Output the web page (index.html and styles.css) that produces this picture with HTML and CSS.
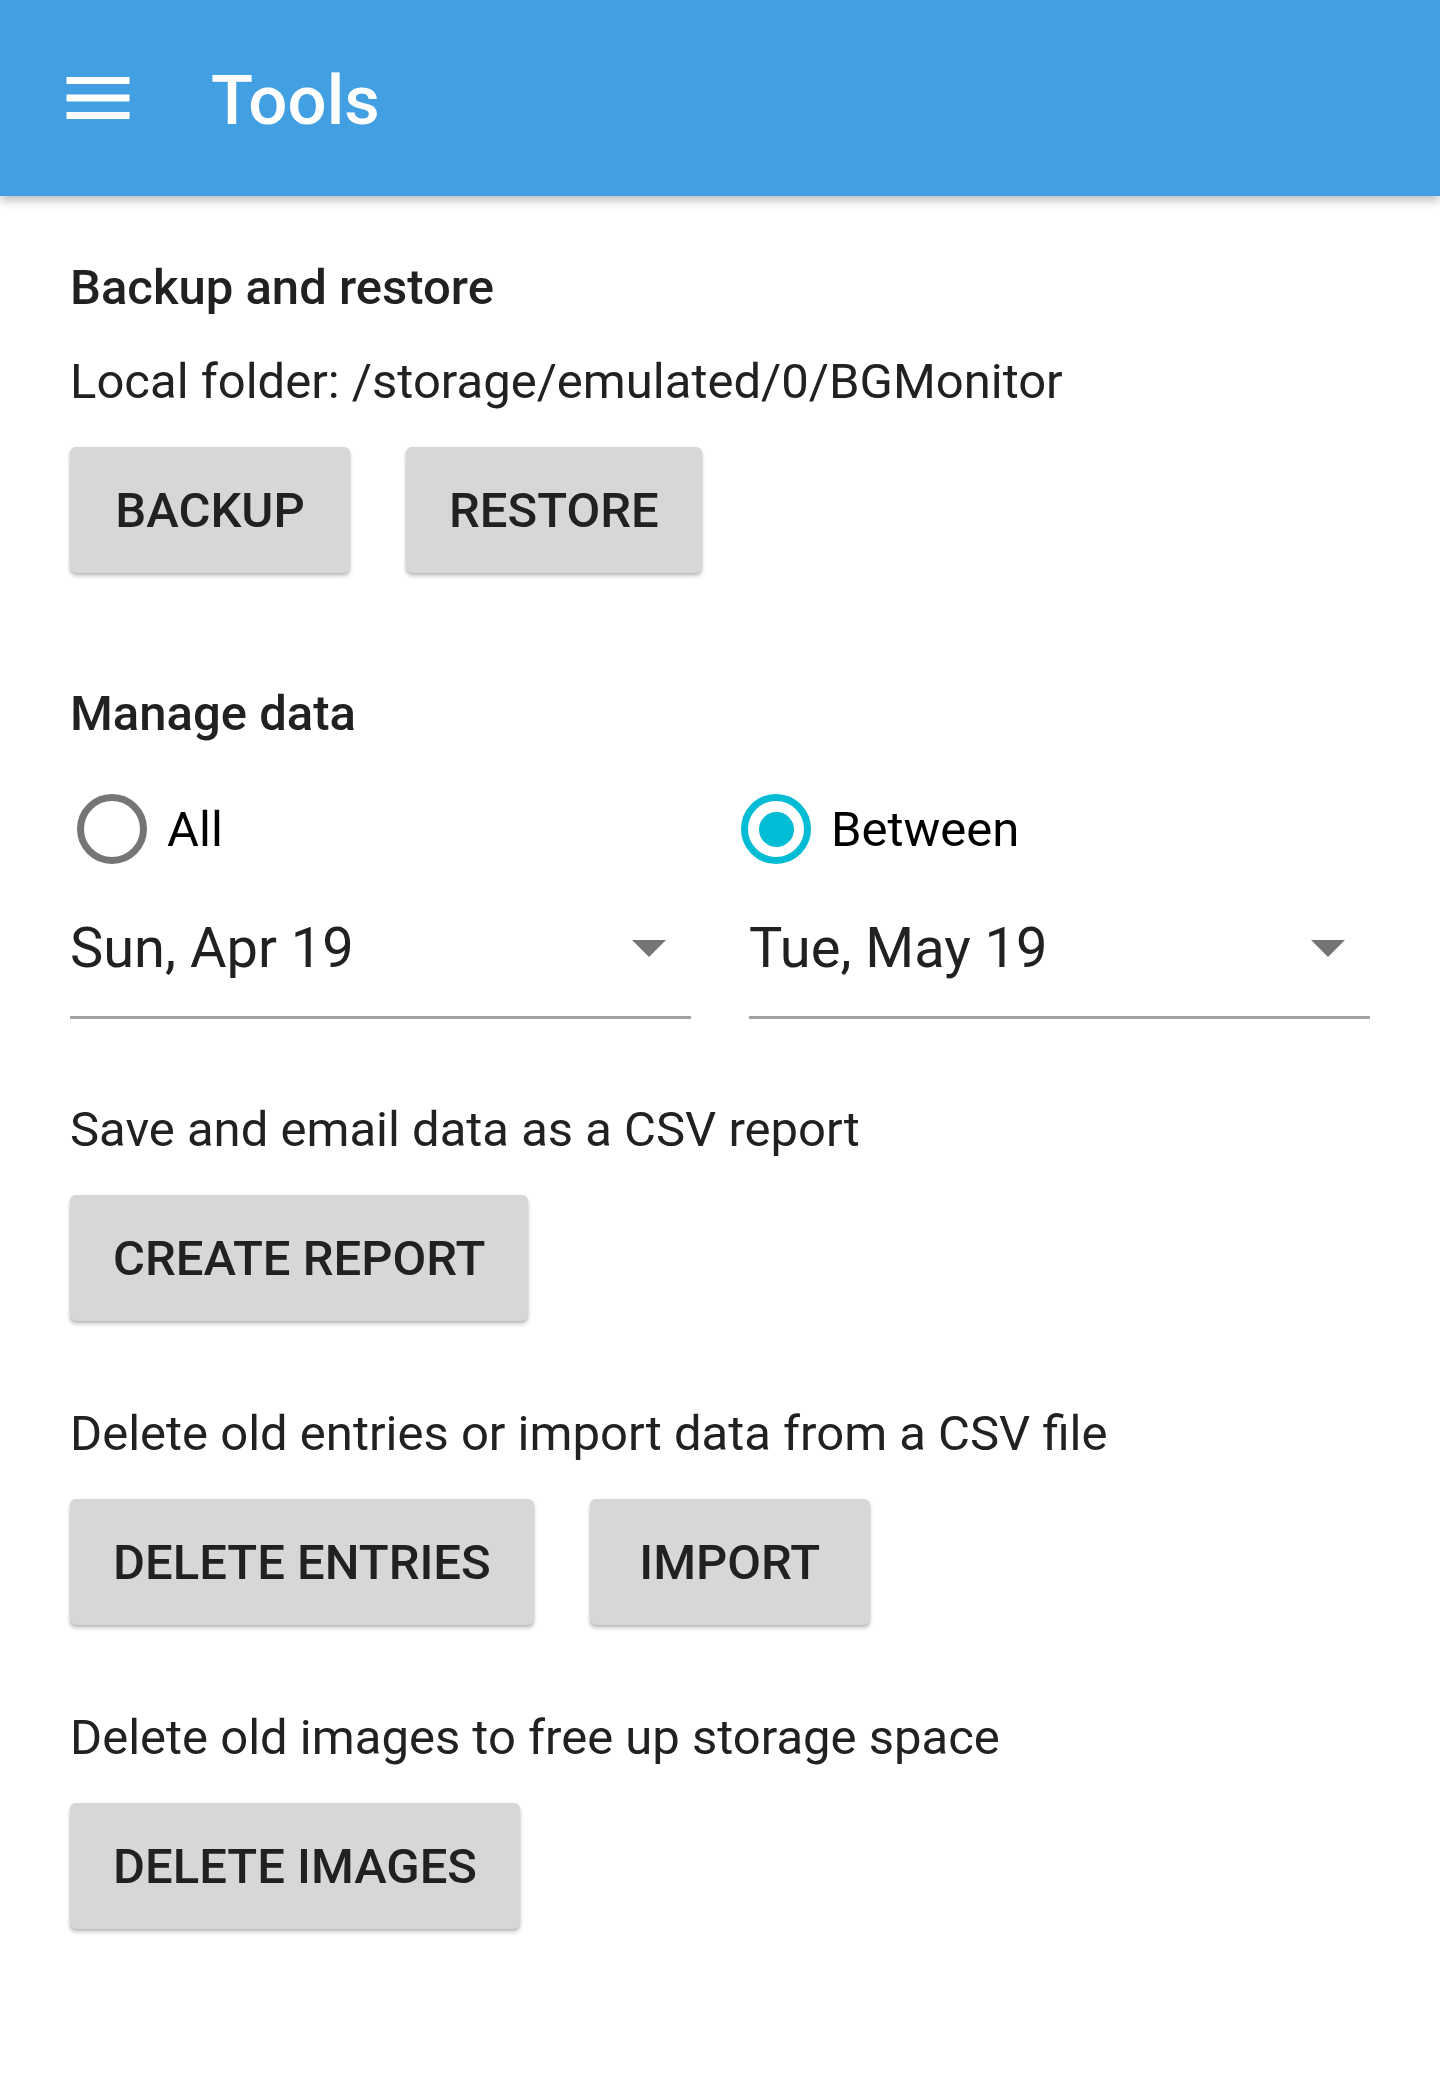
FILE: index.html
```html
<!DOCTYPE html>
<html lang="en">
<head>
<meta charset="utf-8">
<title>Tools</title>
<link rel="stylesheet" href="styles.css">
</head>
<body>
<header class="toolbar">
  <svg class="menu-icon" viewBox="0 0 24 24" aria-hidden="true">
    <rect x="3" y="6" width="18" height="2" fill="#fff"/>
    <rect x="3" y="11" width="18" height="2" fill="#fff"/>
    <rect x="3" y="16" width="18" height="2" fill="#fff"/>
  </svg>
  <h1 class="title">Tools</h1>
</header>
<main class="content">
  <h2 class="group-title first">Backup and restore</h2>
  <p class="info info-gap">Local folder: /storage/emulated/0/BGMonitor</p>
  <div class="btn-row">
    <button class="btn">BACKUP</button>
    <button class="btn">RESTORE</button>
  </div>

  <h2 class="group-title manage">Manage data</h2>
  <div class="radio-row">
    <label class="radio"><span class="radio-circle"></span><span class="radio-label">All</span></label>
    <label class="radio"><span class="radio-circle checked"></span><span class="radio-label">Between</span></label>
  </div>
  <div class="date-row">
    <div class="date-field"><span class="date-text">Sun, Apr 19</span><span class="caret"></span></div>
    <div class="date-field"><span class="date-text">Tue, May 19</span><span class="caret"></span></div>
  </div>

  <p class="info report-text">Save and email data as a CSV report</p>
  <div class="btn-row">
    <button class="btn">CREATE REPORT</button>
  </div>

  <p class="info section-text">Delete old entries or import data from a CSV file</p>
  <div class="btn-row">
    <button class="btn">DELETE ENTRIES</button>
    <button class="btn">IMPORT</button>
  </div>

  <p class="info section-text">Delete old images to free up storage space</p>
  <div class="btn-row">
    <button class="btn">DELETE IMAGES</button>
  </div>
</main>
</body>
</html>
```

FILE: styles.css
```css
* { box-sizing: border-box; }

html, body {
  margin: 0;
  padding: 0;
  background: #ffffff;
}

body {
  font-family: Roboto, "Noto Sans", "Liberation Sans", sans-serif;
  color: #212121;
  width: 1440px;
  min-height: 2075px;
}

.toolbar {
  height: 196px;
  background: #42a0e2;
  display: flex;
  align-items: center;
  padding-left: 56px;
  box-shadow: 0 4px 10px rgba(0, 0, 0, 0.28);
  position: relative;
  z-index: 1;
}

.menu-icon {
  width: 84px;
  height: 84px;
  flex: none;
}

.title {
  margin: 4px 0 0 71px;
  font-size: 69px;
  font-weight: 500;
  color: #ffffff;
  line-height: 1;
}

.content {
  padding: 0 70px;
}

.group-title {
  margin: 0;
  font-size: 49px;
  font-weight: 500;
  line-height: 57px;
  color: #212121;
}

.group-title.first { margin-top: 63px; }
.group-title.manage { margin-top: 112px; }

.info {
  margin: 0;
  font-size: 49px;
  line-height: 57px;
  color: #212121;
}

.info-gap { margin-top: 37px; }
.report-text { margin-top: 82px; }
.section-text { margin-top: 84px; }

.btn-row {
  display: flex;
  gap: 56px;
  margin-top: 37px;
}

.btn {
  min-width: 280px;
  height: 126px;
  padding: 0 43px;
  border: none;
  border-radius: 6px;
  background: #d6d7d7;
  box-shadow: 0 3px 4px rgba(0, 0, 0, 0.22), 0 1px 2px rgba(0, 0, 0, 0.12);
  font-family: Roboto, "Noto Sans", "Liberation Sans", sans-serif;
  font-size: 49px;
  font-weight: 500;
  color: #212121;
  letter-spacing: 0;
}

.radio-row {
  display: grid;
  grid-template-columns: 664px 1fr;
  padding-left: 7px;
  margin-top: 52px;
  height: 70px;
}

.radio {
  display: flex;
  align-items: center;
  gap: 20px;
}

.radio-circle {
  width: 70px;
  height: 70px;
  border-radius: 50%;
  border: 7px solid #757575;
  display: flex;
  align-items: center;
  justify-content: center;
  flex: none;
}

.radio-circle.checked {
  border-color: #00bcd4;
}

.radio-circle.checked::after {
  content: "";
  width: 35px;
  height: 35px;
  border-radius: 50%;
  background: #00bcd4;
}

.radio-label {
  font-size: 49px;
  color: #000000;
  line-height: 57px;
}

.date-row {
  display: grid;
  grid-template-columns: 1fr 1fr;
  column-gap: 58px;
  margin-top: 51px;
}

.date-field {
  display: flex;
  align-items: center;
  justify-content: space-between;
  padding-bottom: 35px;
  border-bottom: 3px solid #a3a3a3;
}

.date-text {
  font-size: 56px;
  line-height: 66px;
  color: #212121;
}

.caret {
  width: 0;
  height: 0;
  border-left: 17px solid transparent;
  border-right: 17px solid transparent;
  border-top: 17px solid #757575;
  margin-right: 25px;
}
```
